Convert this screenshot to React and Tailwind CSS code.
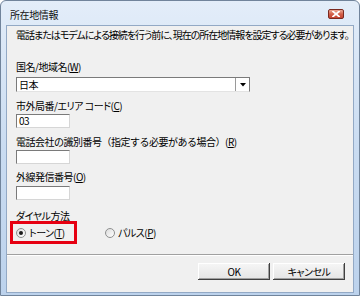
import React from 'react';

const jp = "font-['Noto_Sans_CJK_JP','Noto_Sans',sans-serif] [font-feature-settings:'palt']";

const Radio = ({ checked }) => (
  <span className="w-[10px] h-[10px] rounded-full border border-[#8e8f8f] bg-gradient-to-br from-[#dcdcdc] to-white flex items-center justify-center shrink-0">
    {checked && <span className="w-[4px] h-[4px] rounded-full bg-[#1a1a1a]"></span>}
  </span>
);

const Field = () => (
  <div className="w-[54px] h-[14px] bg-white border border-t-[#7a7a7a] border-l-[#7a7a7a] border-b-[#d6d6d6] border-r-[#d6d6d6]"></div>
);

const Label = ({ text, mn, className = '' }) => (
  <div className={`leading-[12px] h-[12px] whitespace-nowrap ${className}`}>
    {text}(<u>{mn}</u>)
  </div>
);

const WinButton = ({ children }) => (
  <button className="w-[72px] h-[17px] bg-gradient-to-b from-[#f6f6f6] to-[#e4e4e4] text-[10px] leading-[15px] text-black shadow-[inset_-1px_-1px_#404040,inset_1px_1px_#ffffff,inset_-2px_-2px_#a0a0a0]">
    {children}
  </button>
);

export default function App() {
  return (
    <div className={`w-[360px] h-[296px] bg-white text-black text-[10px] tracking-[-0.5px] ${jp}`}>
      <div className="h-full flex flex-col bg-gradient-to-b from-[#e3edf9] via-[#cadcf1] to-[#bcd2ec] border border-[#71849b] rounded-t-[6px] px-[5px] pb-[2px]">
        {/* title bar */}
        <div className="h-[24px] flex items-center shrink-0">
          <span className="ml-[4px] mt-[3px] text-[10px] leading-[12px] tracking-[-0.4px] text-[#111]">所在地情報</span>
          <span className="ml-auto mr-[10px] mt-[2px] w-[16px] h-[10px] rounded-[2px] border border-[#7a2a20] bg-gradient-to-b from-[#eba996] via-[#d3604a] to-[#c54532] flex items-center justify-center">
            <svg width="8" height="6" viewBox="0 0 8 6">
              <path d="M1 0.5 L7 5.5 M7 0.5 L1 5.5" stroke="#fff" strokeWidth="1.8" strokeLinecap="square" />
            </svg>
          </span>
        </div>

        {/* client area */}
        <div className="flex-1 flex flex-col border border-[#93a9c5] bg-[#f0f0f0] pt-[3px]">
          <div className="pl-[9px] leading-[12px] tracking-[-1px] whitespace-nowrap">
            電話またはモデムによる接続を行う前に、現在の所在地情報を設定する必要があります。
          </div>

          <div className="pl-[9px] flex flex-col items-start">
            <Label text="国名/地域名" mn="W" className="mt-[20px]" />
            <div className="mt-[4px] w-[234px] h-[15px] flex bg-white border border-t-[#7a7a7a] border-l-[#7a7a7a] border-b-[#e3e3e3] border-r-[#7a7a7a]">
              <span className="flex-1 pl-[2px] leading-[13px]">日本</span>
              <span className="w-[14px] h-full flex items-center justify-center bg-white border-l border-[#9a9a9a]">
                <svg width="6" height="4" viewBox="0 0 6 4"><path d="M0 0 H6 L3 3.5 Z" fill="#000" /></svg>
              </span>
            </div>

            <Label text="市外局番/エリア コード" mn="C" className="mt-[8px]" />
            <div className="mt-[2px] w-[54px] h-[14px] bg-white border border-t-[#7a7a7a] border-l-[#7a7a7a] border-b-[#d6d6d6] border-r-[#d6d6d6] pl-[2px] leading-[12px]">03</div>

            <Label text="電話会社の識別番号（指定する必要がある場合）" mn="R" className="mt-[8px] [font-feature-settings:normal]" />
            <div className="mt-[2px]"><Field /></div>

            <Label text="外線発信番号" mn="O" className="mt-[7px]" />
            <div className="mt-[3px]"><Field /></div>

            <div className="mt-[10px] leading-[11px] h-[11px]">ダイヤル方法</div>
          </div>

          <div className="pl-[3px] flex items-center">
            <div className="w-[67px] h-[23px] border-[3px] border-[#e60012] flex items-center pl-[3px] gap-[3px]">
              <Radio checked />
              <span className="leading-[12px]">トーン(<u>T</u>)</span>
            </div>
            <div className="ml-[28px] flex items-center gap-[3px]">
              <Radio />
              <span className="leading-[12px]">パルス(<u>P</u>)</span>
            </div>
          </div>

          <div className="mt-[10px] h-[2px] border-t border-[#a0a0a0] border-b border-b-white"></div>

          <div className="mt-[7px] flex justify-end gap-[3px] pr-[8px]">
            <WinButton>OK</WinButton>
            <WinButton>キャンセル</WinButton>
          </div>
        </div>
      </div>
    </div>
  );
}
